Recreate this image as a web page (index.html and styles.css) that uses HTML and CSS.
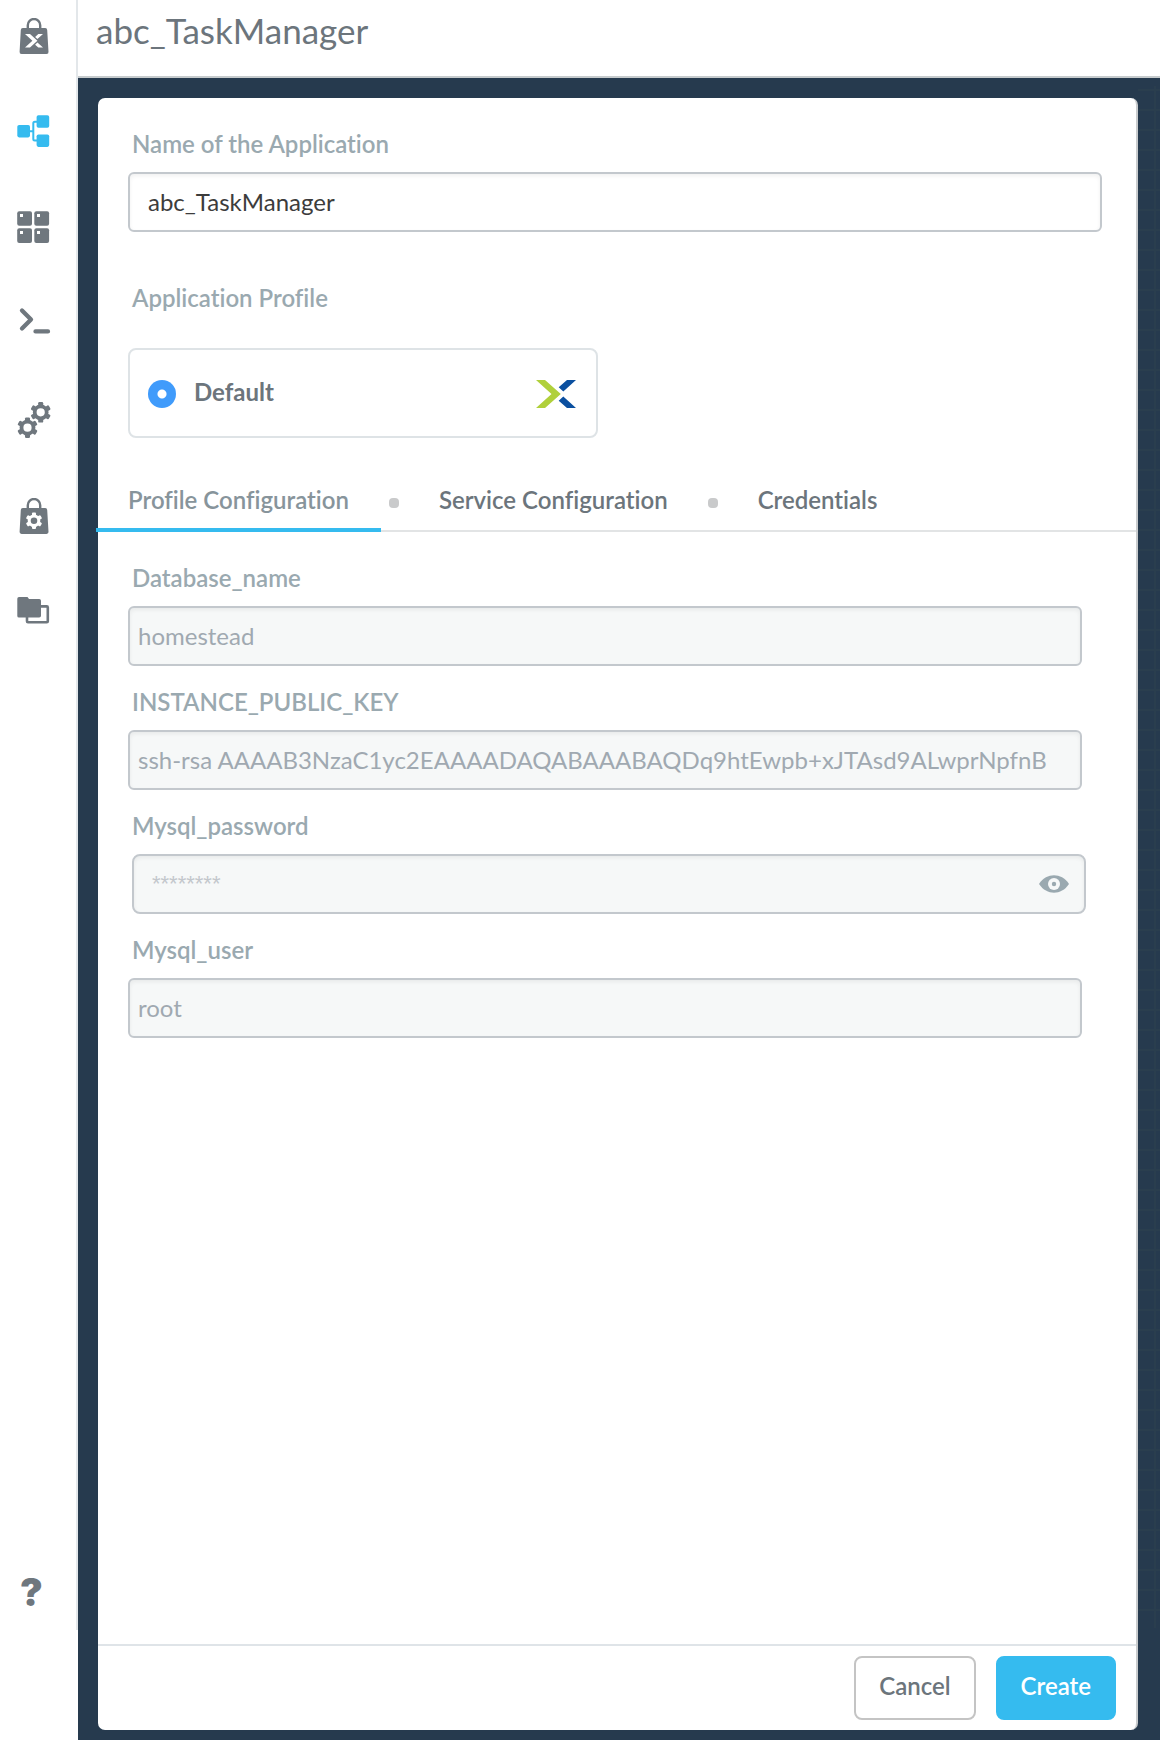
FILE: index.html
```html
<!DOCTYPE html>
<html lang="en">
<head>
<meta charset="utf-8">
<meta name="viewport" content="width=device-width, initial-scale=1">
<title>abc_TaskManager</title>
<link rel="stylesheet" href="styles.css">
</head>
<body>
<svg class="defs" aria-hidden="true">
  <symbol id="gear" viewBox="-11 -11 22 22">
    <circle r="6" fill="none" stroke="currentColor" stroke-width="3.8"/>
    <g fill="currentColor">
      <rect x="-2.5" y="-10.3" width="5" height="4" rx="1.2"/>
      <rect x="-2.5" y="-10.3" width="5" height="4" rx="1.2" transform="rotate(60)"/>
      <rect x="-2.5" y="-10.3" width="5" height="4" rx="1.2" transform="rotate(120)"/>
      <rect x="-2.5" y="-10.3" width="5" height="4" rx="1.2" transform="rotate(180)"/>
      <rect x="-2.5" y="-10.3" width="5" height="4" rx="1.2" transform="rotate(240)"/>
      <rect x="-2.5" y="-10.3" width="5" height="4" rx="1.2" transform="rotate(300)"/>
    </g>
  </symbol>
  <symbol id="bag" viewBox="0 0 36 36">
    <path d="M11.8 11V7.2a6.2 6.2 0 0 1 12.4 0V11" fill="none" stroke="currentColor" stroke-width="2.4"/>
    <path d="M6.8 10h22.4a2 2 0 0 1 2 1.9l1.3 21.8a2 2 0 0 1-2 2.2H5.600a2 2 0 0 1-2-2.200l1.200-21.800a2 2 0 0 1 2-1.900z" fill="currentColor"/>
  </symbol>
</svg>
<div class="app">
  <aside class="sidebar">
    <nav class="nav" aria-label="Main">
      <a class="nav-item" href="#market" aria-label="Marketplace">
        <svg class="icon" viewBox="0 0 36 36"><use href="#bag" width="36" height="36"/><g fill="#fff"><path d="M9 16h5l7.400 6.800-7.400 6.800H9l7.400-6.800z"/><path d="M22.300 16h4.700l-5.600 5.100-2.300-2.200zM22.300 29.600h4.700l-5.600-5.100-2.300 2.200z"/></g></svg>
      </a>
      <a class="nav-item active" href="#blueprints" aria-label="Blueprints">
        <svg class="icon" viewBox="0 0 36 36"><g fill="currentColor"><rect x="1.300" y="11" width="12.700" height="12.400" rx="1.800"/><rect x="20.600" y="1.300" width="12.600" height="12.500" rx="1.800"/><rect x="20.600" y="20.400" width="12.600" height="12.500" rx="1.800"/></g><path d="M14 17.200h3.300M21 7.800h-2.200q-1.500 0-1.500 1.500v15.800q0 1.500 1.500 1.500H21" fill="none" stroke="currentColor" stroke-width="2"/></svg>
      </a>
      <a class="nav-item" href="#apps" aria-label="Applications">
        <svg class="icon" viewBox="0 0 36 36"><g fill="currentColor"><rect x="1.200" y="1.200" width="14.800" height="14.600" rx="2"/><rect x="18.300" y="1.200" width="14.800" height="14.600" rx="2"/><rect x="1.200" y="18.300" width="14.800" height="14.600" rx="2"/><rect x="18.300" y="18.300" width="14.800" height="14.600" rx="2"/></g><path d="M4 4h3v3H4zM21 4h3v3h-3zM4 21h3v3H4zM21 21h3v3h-3z" fill="#fff"/></svg>
      </a>
      <a class="nav-item" href="#runbooks" aria-label="Tasks">
        <svg class="icon" viewBox="0 0 36 36"><path d="M6 4.500l9 9-9 9M19.500 25.400h12.500" fill="none" stroke="currentColor" stroke-width="4.300" stroke-linecap="round" stroke-linejoin="round"/></svg>
      </a>
      <a class="nav-item" href="#settings" aria-label="Settings">
        <svg class="icon" viewBox="0 0 36 36"><use href="#gear" x="13.700" y="-0.700" width="22" height="22"/><use href="#gear" x="0.500" y="14.700" width="22" height="22"/></svg>
      </a>
      <a class="nav-item" href="#manager" aria-label="Marketplace manager">
        <svg class="icon" viewBox="0 0 36 36"><use href="#bag" width="36" height="36"/><g color="#fff"><use href="#gear" x="9.200" y="14" width="17.600" height="17.600"/></g></svg>
      </a>
      <a class="nav-item" href="#projects" aria-label="Projects">
        <svg class="icon" viewBox="0 0 36 36"><path d="M3 3h8.500l1.500 2h10.200a1.800 1.800 0 0 1 1.800 1.800v15a1.800 1.800 0 0 1-1.800 1.800H3a1.700 1.700 0 0 1-1.700-1.700V4.700A1.700 1.700 0 0 1 3 3z" fill="currentColor"/><path d="M25 12.400h5.800a1 1 0 0 1 1 1v13.800a1 1 0 0 1-1 1H12a1 1 0 0 1-1-1V23" fill="none" stroke="currentColor" stroke-width="2.600"/></svg>
      </a>
      <button class="nav-item help" type="button" aria-label="Help">?</button>
    </nav>
  </aside>
  <div class="main">
    <header class="header"><h1 class="title">abc_TaskManager</h1></header>
    <div class="workspace">
      <form class="panel">
        <div class="panel-body">
          <section class="basics">
            <label class="label" for="app-name">Name of the Application</label>
            <input class="input" id="app-name" type="text" value="abc_TaskManager">
            <fieldset class="profile">
              <legend class="label">Application Profile</legend>
              <label class="profile-card">
                <input class="radio" type="radio" name="profile" checked>
                <span class="profile-name">Default</span>
                <svg class="logo" viewBox="0 0 40 28" aria-hidden="true"><path d="M0 0h9l15.800 14L9 28H0l15.500-14z" fill="#b0d03b"/><path d="M31 0h9L27.300 11.500 22.700 7.300zM31 28h9L27.300 16.500l-4.600 4.200z" fill="#0b50a0"/></svg>
              </label>
            </fieldset>
          </section>
          <div class="tabs" role="tablist">
            <button class="tab selected" type="button" role="tab" aria-selected="true">Profile Configuration</button>
            <span class="dot"></span>
            <button class="tab" type="button" role="tab" aria-selected="false">Service Configuration</button>
            <span class="dot"></span>
            <button class="tab" type="button" role="tab" aria-selected="false">Credentials</button>
          </div>
          <section class="fields">
            <div class="field">
              <label class="label" for="db">Database_name</label>
              <input class="input" id="db" type="text" value="homestead" disabled>
            </div>
            <div class="field">
              <label class="label" for="key">INSTANCE_PUBLIC_KEY</label>
              <input class="input" id="key" type="text" value="ssh-rsa AAAAB3NzaC1yc2EAAAADAQABAAABAQDq9htEwpb+xJTAsd9ALwprNpfnB" disabled>
            </div>
            <div class="field">
              <label class="label" for="password">Mysql_password</label>
              <div class="secret">
                <input class="secret-input" id="password" type="password" placeholder="********" disabled>
                <button class="reveal" type="button" aria-label="Show password">
                  <svg class="eye" viewBox="0 0 30 18"><path d="M0 9C4 3 9.500.3 15 .3S26 3 30 9c-4 6-9.500 8.700-15 8.700S4 15 0 9z" fill="currentColor"/><circle cx="15" cy="9" r="6" fill="#f6f8f8"/><circle cx="15" cy="9" r="2.200" fill="currentColor"/></svg>
                </button>
              </div>
            </div>
            <div class="field">
              <label class="label" for="user">Mysql_user</label>
              <input class="input" id="user" type="text" value="root" disabled>
            </div>
          </section>
        </div>
        <footer class="actions">
          <button class="btn" type="button">Cancel</button>
          <button class="btn primary" type="submit">Create</button>
        </footer>
      </form>
      <div class="canvas-edge"></div>
    </div>
  </div>
</div>
</body>
</html>
```

FILE: styles.css
```css
* { box-sizing: border-box; }

body {
  margin: 0;
  font-family: Lato, sans-serif;
  font-size: 24px;
  line-height: 32px;
  font-variant-ligatures: none;
  color: #6c757c;
  background: #fff;
}

input, button { font: inherit; font-variant-ligatures: none; color: inherit; }
button { cursor: pointer; }
.defs { position: absolute; width: 0; height: 0; }

.app { display: flex; min-height: 100vh; }

.sidebar {
  display: flex;
  flex-direction: column;
  flex: none;
  width: 78px;
  padding-bottom: 110px;
}
.nav {
  display: flex;
  flex-direction: column;
  flex: 1;
  gap: 40px;
  padding: 8px 0 10px;
  border-right: 2px solid #e3e7ea;
}
.nav-item {
  display: flex;
  align-items: center;
  height: 56px;
  padding: 0 0 0 16px;
  border: 0;
  background: none;
  color: #6f777e;
}
.nav-item.active { color: #35bbef; }
.icon { width: 36px; height: 36px; overflow: visible; }
.help {
  margin-top: auto;
  padding-left: 20px;
  font-family: Inter, sans-serif;
  font-size: 38px;
  font-weight: 900;
}

.main { display: flex; flex-direction: column; flex: 1; min-width: 0; }
.header {
  height: 78px;
  padding: 8px 18px;
  border-bottom: 2px solid #c6cbcd;
}
.title { margin: 0; font-size: 35px; line-height: 44px; font-weight: 400; }

.workspace {
  display: flex;
  flex: 1;
  padding: 20px 0 10px 20px;
  background: #263a4e;
}
.panel {
  display: flex;
  flex-direction: column;
  flex: 1;
  min-width: 0;
  border-right: 2px solid #c8cbcd;
  border-radius: 7px;
  background: #fff;
}
.canvas-edge {
  width: 22px;
  margin: -12px 0 102px;
  background:
    linear-gradient(90deg, transparent 16px, #2a3e4e 16px, #2a3e4e 18px, transparent 18px),
    repeating-linear-gradient(transparent 0, transparent 3px, #2a3e4e 3px, #2a3e4e 5px, transparent 5px, transparent 20px);
}
.panel-body { flex: 1; }

.basics { padding: 30px 34px 0 30px; }
.label {
  display: block;
  padding: 0 4px;
  margin-bottom: 12px;
  font-weight: 600;
  color: #9aa9b0;
}
.input {
  display: block;
  width: 100%;
  height: 60px;
  padding: 0 18px 2px;
  border: 2px solid #c3c8cd;
  border-radius: 6px;
  background: #fff;
  box-shadow: inset 0 2px 4px rgba(0, 0, 0, .06);
  color: #3c3c3c;
}
.profile { margin: 50px 0 0; padding: 0; border: 0; }
.profile .label { margin-bottom: 34px; }
.profile-card {
  display: flex;
  align-items: center;
  width: 470px;
  max-width: 100%;
  height: 90px;
  padding: 2px 20px 0 18px;
  border: 2px solid #dee3e6;
  border-radius: 8px;
}
.radio {
  appearance: none;
  width: 28px;
  height: 28px;
  margin: 0 18px 0 0;
  border-radius: 50%;
  background: radial-gradient(circle, #fff 4px, #409bfb 5px);
}
.profile-name { padding-bottom: 4px; font-weight: 700; }
.logo { width: 40px; height: 28px; margin-left: auto; }

.tabs {
  display: flex;
  align-items: flex-end;
  height: 56px;
  margin: 38px 0 0 -2px;
  box-shadow: inset 0 -2px #e2e4e5;
}
.tab {
  height: 56px;
  padding: 0 32px 4px;
  border: 0;
  border-bottom: 4px solid transparent;
  background: none;
  font-weight: 600;
}
.tab.selected { border-color: #35bbef; color: #87949b; }
.dot {
  width: 10px;
  height: 10px;
  margin: 0 8px 24px;
  border-radius: 4px;
  background: #c9cacb;
}

.fields {
  display: grid;
  gap: 20px;
  padding: 30px 54px 30px 30px;
}
.fields .input {
  padding: 0 8px 2px;
  background: #f6f8f8;
  color: #a0a9b1;
}
.secret {
  display: flex;
  align-items: center;
  height: 60px;
  margin: 0 -4px 0 4px;
  padding: 0 15px 0 18px;
  border: 2px solid #c3c8cd;
  border-radius: 8px;
  background: #f6f8f8;
  box-shadow: inset 0 2px 4px rgba(0, 0, 0, .06);
}
.secret-input {
  flex: 1;
  min-width: 0;
  padding: 0;
  border: 0;
  background: none;
  font-family: "Liberation Sans", sans-serif;
  font-size: 22px;
}
.secret-input::placeholder { color: #c3c7cc; }
.reveal { display: flex; padding: 0; border: 0; background: none; color: #9aa9b0; }
.eye { width: 30px; height: 18px; }

.actions {
  display: flex;
  justify-content: flex-end;
  gap: 20px;
  padding: 10px 20px;
  border-top: 2px solid #dfe4e8;
}
.btn {
  min-width: 120px;
  height: 64px;
  padding: 0 23px 4px;
  border: 2px solid #c4c4c4;
  border-radius: 8px;
  background: #fff;
  font-weight: 600;
}
.btn.primary { border-color: #35bbef; background: #35bbef; color: #fff; }
```
